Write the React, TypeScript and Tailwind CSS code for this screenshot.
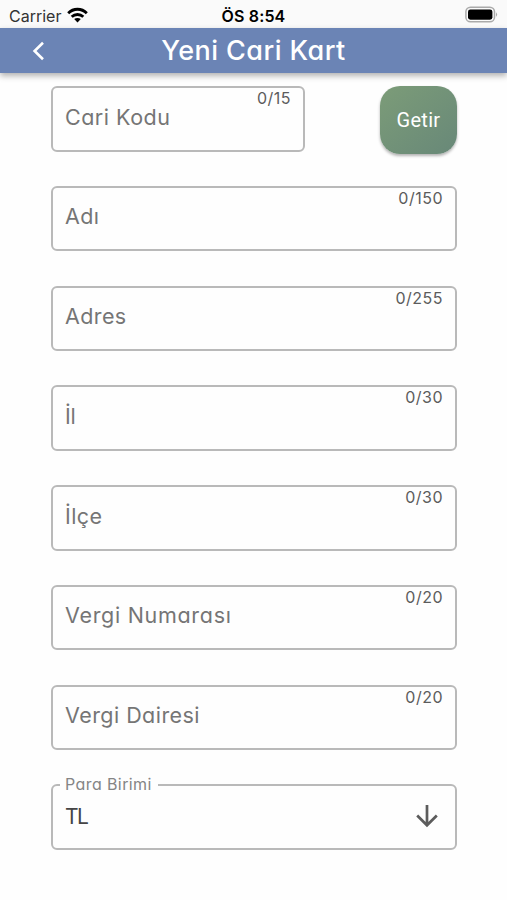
import React from "react";

type FieldProps = { label: string; count: string; tracking?: string; width?: string };

function Field({ label, count, tracking = "tracking-[0.4px]", width = "w-full" }: FieldProps) {
  return (
    <div className={`${width} flex h-[65.5px] shrink-0 justify-between rounded-[6px] border-2 border-[#b9b9b9] px-[12px]`}>
      <span className={`mt-[13.5px] whitespace-nowrap text-[21.5px] leading-[30px] text-[#757575] ${tracking}`}>{label}</span>
      <span className="whitespace-nowrap text-[16px] leading-[20px] tracking-[0.5px] text-[#5c5c5c]">{count}</span>
    </div>
  );
}

function StatusBar() {
  return (
    <div className="grid h-[28px] grid-cols-3 items-center bg-[#fafafa] px-[9px] font-['Inter',sans-serif] text-black [font-feature-settings:normal]">
      <div className="flex items-center gap-[6px]">
        <span className="pt-[2px] text-[16px] leading-[28px] text-[#333]">Carrier</span>
        <svg className="-mt-[1px]" width="21" height="16" viewBox="0 0 21 16" fill="none" stroke="#000" strokeWidth="2.8">
          <path d="M1.2 6.2C6.4 .9 14.6 .9 19.8 6.2" />
          <path d="M4.7 9.8C8 6.7 13 6.7 16.3 9.8" />
          <path d="M7.2 12.1C9.1 10.5 11.9 10.5 13.8 12.1L10.5 15.4Z" fill="#000" stroke="none" />
        </svg>
      </div>
      <span className="pt-[2px] text-center text-[16px] leading-[26px] font-semibold tracking-[0.15px]">ÖS 8:54</span>
      <svg className="-mt-[1px] justify-self-end" width="33" height="17" viewBox="0 0 33 17">
        <rect x="0.9" y="1.2" width="28.6" height="14.6" rx="4.6" fill="#fafafa" stroke="#aaa" strokeWidth="1.5" />
        <rect x="3" y="3.4" width="24.4" height="10.3" rx="2.4" fill="#000" />
        <path d="M31 6.2Q33.2 8.5 31 10.8Z" fill="#aaa" />
      </svg>
    </div>
  );
}

export default function App() {
  return (
    <div className="h-[900px] w-[507px] overflow-hidden bg-[#fefefe] font-['Inter',sans-serif] [font-feature-settings:'cv11']">
      <StatusBar />
      <header className="grid h-[45px] grid-cols-[60px_1fr_60px] items-center bg-[#6b84b5] shadow-[0_3px_6px_rgba(0,0,0,0.3)]">
        <svg className="ml-[31px]" width="14" height="20" viewBox="0 0 14 20" fill="none" stroke="#fff" strokeWidth="2.6">
          <path d="M12 1.8L3.6 10L12 18.2" />
        </svg>
        <h1 className="pt-[1px] text-center text-[27px] leading-[44px] font-medium tracking-[0.45px] text-white">Yeni Cari Kart</h1>
      </header>
      <main className="flex flex-col gap-[34.25px] pt-[13px] pr-[50px] pl-[51px]">
        <div className="flex h-[65.5px] justify-between">
          <Field label="Cari Kodu" count="0/15" width="w-[254px]" tracking="tracking-[0.5px]" />
          <button className="h-[68px] w-[77px] rounded-[20px] bg-linear-to-br from-[#7c9c78] to-[#688878] font-['Roboto',sans-serif] text-[20px] tracking-[0.3px] text-white shadow-[0_2px_3px_rgba(0,0,0,0.3)]">
            Getir
          </button>
        </div>
        <Field label="Adı" count="0/150" />
        <Field label="Adres" count="0/255" />
        <Field label="İl" count="0/30" tracking="tracking-[-0.2px]" />
        <Field label="İlçe" count="0/30" />
        <Field label="Vergi Numarası" count="0/20" tracking="tracking-[0.7px]" />
        <Field label="Vergi Dairesi" count="0/20" tracking="tracking-[0.45px]" />
        <fieldset className="-mt-[9px] flex h-[75px] items-start justify-between rounded-[6px] border-2 border-[#b9b9b9] pr-[16px] pl-[7px]">
          <legend className="h-[20px] pr-[6px] pl-[5px] text-[16px] leading-[18px] tracking-[0.4px] text-[#858585]">Para Birimi</legend>
          <span className="mt-[7px] ml-[5px] text-[21px] leading-[30px] tracking-[-1.6px] text-[#454545]">TL</span>
          <svg className="mt-[9px]" width="24" height="24" viewBox="0 0 24 24" fill="none" stroke="#5c5c5c" strokeWidth="2.7">
            <path d="M12 1V21.5M2.2 11.5L12 21.3L21.8 11.5" />
          </svg>
        </fieldset>
      </main>
    </div>
  );
}
